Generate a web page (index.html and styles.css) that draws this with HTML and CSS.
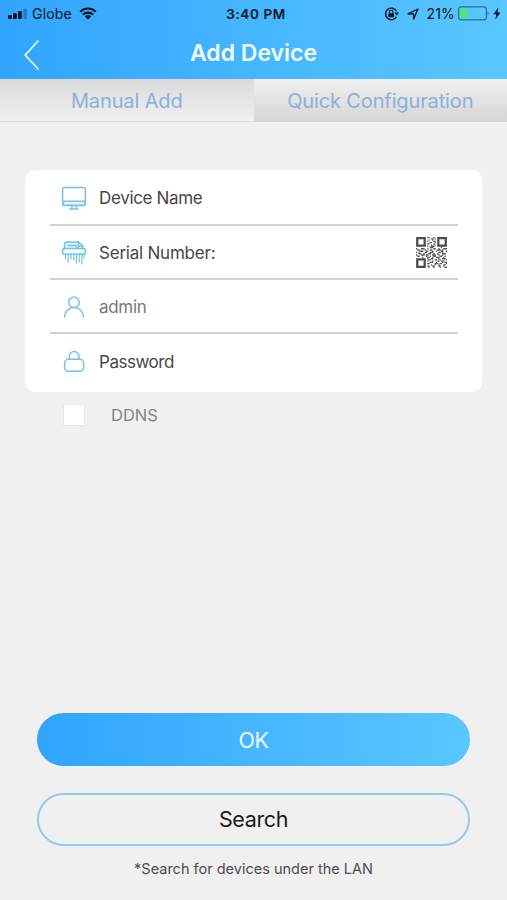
FILE: index.html
```
<!DOCTYPE html>
<html lang="en">

<head>
  <meta charset="UTF-8" />
  <meta name="viewport" content="width=device-width, initial-scale=1.0" />
  <title>Add Device</title>
  <link rel="stylesheet" href="styles.css">
</head>

<body>
  <header class="header">
    <div class="status">
      <div class="status-left">
        <svg class="signal" width="20" height="12" viewBox="0 0 20 12">
          <rect x="0" y="7" width="3.8" height="4" rx="1" />
          <rect x="5" y="5.3" width="3.8" height="5.7" rx="1" />
          <rect x="10" y="3" width="3.8" height="8" rx="1" />
          <rect x="15.3" y="0.5" width="3.6" height="10.5" rx="1" opacity="0.3" />
        </svg>
        <span class="carrier">Globe</span>
        <svg class="wifi" width="18" height="13" viewBox="0 0 18 13">
          <path d="M1.2 4.7a11.2 11.2 0 0 1 15.6 0M3.9 7.7a7.3 7.3 0 0 1 10.2 0" fill="none" stroke="#051525" stroke-width="2.1" />
          <path d="M9 12.5L5.9 9.5a4.5 4.5 0 0 1 6.2 0z" />
        </svg>
      </div>
      <span class="time">3:40 PM</span>
      <div class="status-right">
        <svg width="15" height="14" viewBox="0 0 15 14">
          <path d="M12.4 9.8A5.8 5.8 0 1 1 12.5 4.2" fill="none" stroke="#051525" stroke-width="1.4" />
          <path d="M10.4 5.4h4.5l-2.2 3z" />
          <rect x="4.3" y="6.2" width="5.8" height="4" rx="0.6" />
          <path d="M5.5 6.5V5a1.7 1.7 0 0 1 3.4 0v1.5" fill="none" stroke="#051525" stroke-width="1.1" />
        </svg>
        <svg class="location" width="12" height="12" viewBox="0 0 12 12">
          <path d="M1 5.8L11 1L6.6 11V6z" fill="none" stroke="#051525" stroke-width="1.3" stroke-linejoin="round" />
        </svg>
        <span class="percent">21%</span>
        <svg class="battery" width="32" height="15" viewBox="0 0 32 15">
          <rect x="0.6" y="0.8" width="27.8" height="13" rx="2.6" fill="none" stroke="#26729c" stroke-width="1.2" />
          <rect x="2" y="2.3" width="7" height="10" rx="1.2" fill="#52e66b" />
          <path d="M29.6 5v4.6q2.2-2.3 0-4.6z" fill="#26729c" />
        </svg>
        <svg class="bolt" width="8" height="13" viewBox="0 0 8 13">
          <path d="M5.5 0.3L0.4 7.2H3.4L2.3 12.6L7.6 5.5H4.5z" />
        </svg>
      </div>
    </div>
    <div class="nav">
      <svg class="back" width="18" height="32" viewBox="0 0 18 32">
        <path d="M15.5 1.5L2.2 16L15.5 30.5" />
      </svg>
      <h1>Add Device</h1>
    </div>
  </header>

  <div class="tabs">
    <div class="tab active">Manual Add</div>
    <div class="tab">Quick Configuration</div>
  </div>

  <div class="card">
    <div class="row first">
      <svg class="icon" width="26" height="26" viewBox="0 0 26 26">
        <rect x="1.6" y="2.5" width="22.8" height="18" rx="2.2" />
        <path d="M2 16.3h22v2q0 2-2 2H4q-2 0-2-2z" fill="#e3f5fc" />
        <path d="M11 20.5v3M15 20.5v3M8.4 24.1h9.2" />
      </svg>
      <span class="label device">Device Name</span>
    </div>
    <div class="row">
      <svg class="icon" width="26" height="26" viewBox="0 0 26 26">
        <path d="M3.5 9V4.5Q3.5 2 6 2H17.5L22 6.2V9zM6.5 5.5H14.5L17 8.5M17.5 2V6.2H22" fill="#dff4fc" />
        <rect x="1.5" y="8.5" width="23" height="5.8" rx="2.4" fill="#f0faff" />
        <path d="M4.5 14.5v5M7.2 14.5v8.3M10 14.5v5.3M12.8 14.5v6M15.5 14.5v9M18.2 14.5v8M20.9 14.5v10M23 14.5v4" stroke-width="1.2" />
      </svg>
      <span class="label serial">Serial Number:</span>
      <svg class="qr" width="31" height="31" viewBox="0 0 25 25">
        <path d="M1 1h6v6h-6zM18 1h6v6h-6zM1 18h6v6h-6z" fill="none" stroke="#4a4a4a" stroke-width="1.8" />
        <path d="M9 .5h2m3 0h1M12 1.5h2m1 0h1M10 2.5h1m2 0h1M9 3.5h1m4 0h2M11 4.5h2m2 0h1M9 5.5h2m3 0h1M12 6.5h1m2 0h1M9 7.5h1m2 0h3M11 8.5h3m6 0h1M0 9.5h1m3 0h3m2 0h1m4 0h2m2 0h1m3 0h3M1 10.5h2m4 0h1m3 0h2m4 0h3m1 0h1M3 11.5h3m2 0h2m3 0h1m2 0h1m3 0h2m2 0h1M0 12.5h1m1 0h1m4 0h2m2 0h3m4 0h2m1 0h1M2 13.5h2m2 0h1m3 0h2m2 0h1m2 0h1m3 0h3M0 14.5h1m3 0h3m1 0h2m3 0h3m2 0h1m2 0h1M1 15.5h2m5 0h1m2 0h1m2 0h2m3 0h2m2 0h1M5 16.5h1m3 0h2m2 0h1m2 0h3m3 0h1M9 17.5h1m2 0h2m4 0h1m2 0h3M10 18.5h2m3 0h2m2 0h1m4 0h1M9 19.5h1m3 0h1m3 0h2m1 0h3M11 20.5h3m2 0h1m4 0h1m1 0h2M9 21.5h2m4 0h3m1 0h2m3 0h1M12 22.5h1m2 0h1m2 0h1m3 0h2M9 23.5h2m2 0h2m3 0h2m2 0h1M10 24.5h1m3 0h1m4 0h1m3 0h2" stroke="#555" stroke-width="1.1" />
      </svg>
    </div>
    <div class="row">
      <svg class="icon" width="26" height="26" viewBox="0 0 26 26">
        <circle cx="13" cy="8.3" r="5.2" />
        <path d="M3.6 23.6C3.6 10.2 22.4 10.2 22.4 23.6" />
      </svg>
      <span class="label admin">admin</span>
    </div>
    <div class="row last">
      <svg class="icon" width="26" height="26" viewBox="0 0 26 26">
        <rect x="3.6" y="10.3" width="19" height="12" rx="3.8" />
        <path d="M8.2 10V7.5a4.9 4.9 0 0 1 9.8 0V10" />
      </svg>
      <span class="label password">Password</span>
    </div>
  </div>

  <div class="ddns">
    <span class="checkbox"></span>
    <span class="ddns-label">DDNS</span>
  </div>

  <div class="actions">
    <button class="btn ok">OK</button>
    <button class="btn search">Search</button>
    <p class="hint">*Search for devices under the LAN</p>
  </div>
</body>

</html>
```
FILE: styles.css
```
* {
  box-sizing: border-box;
}

body {
  margin: 0;
  height: 900px;
  display: flex;
  flex-direction: column;
  background: #f0f0f0;
  font-family: Inter, "Liberation Sans", sans-serif;
  overflow: hidden;
}

svg {
  display: block;
  flex: none;
}

.header {
  height: 79px;
  background: linear-gradient(90deg, #31a4ff, #5ac7ff);
}

.status {
  display: grid;
  grid-template-columns: 1fr auto 1fr;
  align-items: center;
  height: 27px;
  padding: 0 6px 0 8px;
  color: #051525;
  fill: #051525;
  font-size: 14px;
}

.status-left,
.status-right {
  display: flex;
  align-items: center;
}

.status-right {
  justify-content: flex-end;
}

.carrier {
  margin-left: 4px;
  letter-spacing: 0.2px;
}

.wifi {
  margin-left: 7px;
}

.time {
  margin-left: 3px;
  font-size: 13.5px;
  font-weight: 600;
  letter-spacing: 0.6px;
}

.location {
  margin: 0 7px 0 8px;
}

.percent {
  letter-spacing: 0.2px;
}

.battery {
  margin-left: 3px;
}

.bolt {
  margin-left: 3px;
}

.nav {
  display: grid;
  grid-template-columns: 40px 1fr 40px;
  align-items: center;
  height: 52px;
}

.back {
  margin: 3px 0 0 23px;
  fill: none;
  stroke: #e2faff;
  stroke-width: 1.8;
}

h1 {
  margin: 0;
  color: #f0fcff;
  font-size: 23px;
  font-weight: 600;
  text-align: center;
}

.tabs {
  display: flex;
  height: 43px;
}

.tab {
  flex: 1;
  line-height: 45px;
  text-align: center;
  font-size: 20px;
  letter-spacing: -0.13px;
  color: #8bb0de;
  background: linear-gradient(#f0f0f0, #d5d5d5);
}

.tab.active {
  background: linear-gradient(#dadada, #f0f0f0);
  border-bottom: 1px solid #dcdcdc;
}

.card {
  margin: 48px 25px 0;
  height: 222px;
  padding: 0 24px 0 25px;
  border-radius: 10px;
  background: #fff;
}

.row {
  display: flex;
  align-items: center;
  height: 54px;
  padding: 1px 11px 0 11px;
  border-bottom: 2px solid #d2d2d2;
}

.row.first {
  height: 56px;
}

.row.last {
  height: 55px;
  border-bottom: none;
}

.icon {
  fill: none;
  stroke: #77c2e3;
  stroke-width: 1.5;
}

.label {
  margin-left: 12px;
  font-size: 17px;
  letter-spacing: -0.3px;
  color: #474747;
}

.label.device {
  letter-spacing: -0.33px;
}

.label.serial {
  letter-spacing: -0.22px;
}

.label.password {
  letter-spacing: -0.47px;
}

.label.admin {
  color: #77777c;
}

.qr {
  margin-left: auto;
}

.ddns {
  display: flex;
  align-items: center;
  height: 46px;
  padding-left: 63px;
}

.checkbox {
  width: 22px;
  height: 22px;
  background: #fff;
  border: 1px solid #e7e7e7;
}

.ddns-label {
  margin-left: 26px;
  font-size: 16.5px;
  color: #858585;
}

.actions {
  margin: auto 37px 0;
  height: 187px;
}

.btn {
  display: block;
  width: 433px;
  height: 53px;
  padding: 0;
  border: none;
  border-radius: 27px;
  font-family: inherit;
  font-size: 21.5px;
  letter-spacing: -0.35px;
}

.ok {
  color: #f0fcff;
  background: linear-gradient(90deg, #31a4ff, #5ac7ff);
}

.search {
  margin-top: 27px;
  padding-bottom: 2px;
  color: #1a1a1a;
  background: none;
  border: 2px solid #93c9ea;
}

.hint {
  margin: 13px 0 0;
  text-align: center;
  font-size: 14.5px;
  line-height: 20px;
  color: #4c4c52;
}
```
